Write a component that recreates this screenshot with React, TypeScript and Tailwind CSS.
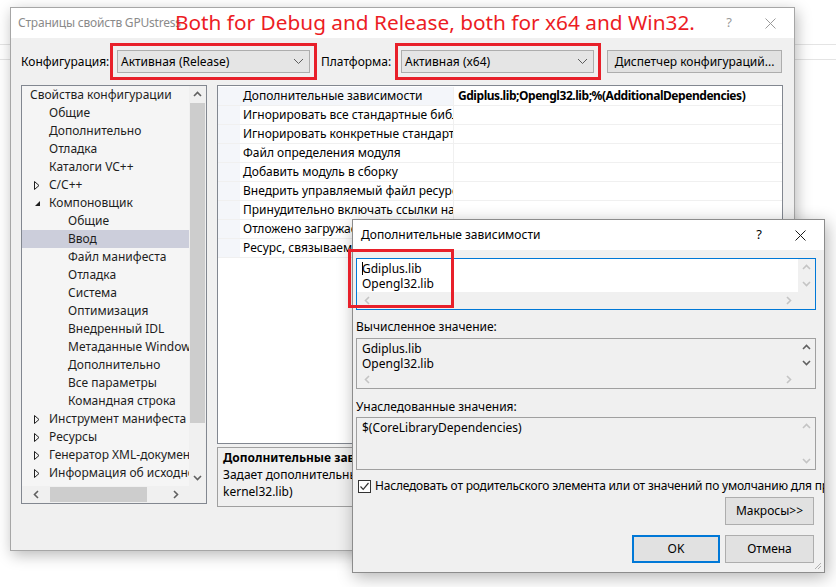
import React from 'react';

const FONT = "font-['Noto_Sans',sans-serif]";

type Dir = 'up' | 'down' | 'left' | 'right';

function Chevron({ dir, color = '#606060', size = 9 }: { dir: Dir; color?: string; size?: number }) {
  const pts: Record<Dir, string> = {
    up: '1,6 4.5,2.5 8,6',
    down: '1,3 4.5,6.5 8,3',
    left: '6,1 2.5,4.5 6,8',
    right: '3,1 6.5,4.5 3,8',
  };
  return (
    <svg width={size} height={size} viewBox="0 0 9 9" className="shrink-0">
      <polyline points={pts[dir]} fill="none" stroke={color} strokeWidth="1.6" />
    </svg>
  );
}

function ComboArrow() {
  return (
    <svg width="11" height="7" viewBox="0 0 11 7" className="shrink-0">
      <polyline points="1,1 5.5,5.5 10,1" fill="none" stroke="#5c5c5c" strokeWidth="1" />
    </svg>
  );
}

function CloseX({ color }: { color: string }) {
  return (
    <svg width="11" height="11" viewBox="0 0 11 11" className="shrink-0">
      <path d="M0.5 0.5 L10.5 10.5 M10.5 0.5 L0.5 10.5" stroke={color} strokeWidth="1" />
    </svg>
  );
}

function Expander({ open }: { open?: boolean }) {
  if (open) {
    return (
      <svg width="7" height="7" viewBox="0 0 7 7" className="shrink-0">
        <polygon points="6,1 6,6 1,6" fill="#1e1e1e" />
      </svg>
    );
  }
  return (
    <svg width="6" height="9" viewBox="0 0 6 9" className="shrink-0">
      <polygon points="0.5,0.5 5,4.5 0.5,8.5" fill="none" stroke="#1e1e1e" strokeWidth="1" />
    </svg>
  );
}

interface TreeRow {
  text: string;
  level: number;
  exp?: 'open' | 'closed';
  selected?: boolean;
}

const treeRows: TreeRow[] = [
  { text: 'Свойства конфигурации', level: 0 },
  { text: 'Общие', level: 1 },
  { text: 'Дополнительно', level: 1 },
  { text: 'Отладка', level: 1 },
  { text: 'Каталоги VC++', level: 1 },
  { text: 'C/C++', level: 1, exp: 'closed' },
  { text: 'Компоновщик', level: 1, exp: 'open' },
  { text: 'Общие', level: 2 },
  { text: 'Ввод', level: 2, selected: true },
  { text: 'Файл манифеста', level: 2 },
  { text: 'Отладка', level: 2 },
  { text: 'Система', level: 2 },
  { text: 'Оптимизация', level: 2 },
  { text: 'Внедренный IDL', level: 2 },
  { text: 'Метаданные Windows', level: 2 },
  { text: 'Дополнительно', level: 2 },
  { text: 'Все параметры', level: 2 },
  { text: 'Командная строка', level: 2 },
  { text: 'Инструмент манифеста', level: 1, exp: 'closed' },
  { text: 'Ресурсы', level: 1, exp: 'closed' },
  { text: 'Генератор XML-документов', level: 1, exp: 'closed' },
  { text: 'Информация об исходном коде', level: 1, exp: 'closed' },
];

const gridRows = [
  'Дополнительные зависимости',
  'Игнорировать все стандартные библиотеки',
  'Игнорировать конкретные стандартные библиотеки',
  'Файл определения модуля',
  'Добавить модуль в сборку',
  'Внедрить управляемый файл ресурсов',
  'Принудительно включать ссылки на символы',
  'Отложено загружаемые библиотеки DLL',
  'Ресурс, связываемый со сборкой',
];

function Tree() {
  return (
    <div className="w-[186px] h-[419px] border border-[#828790] bg-[#f5f5f5] flex flex-col">
      <div className="flex flex-1 min-h-0">
        <div className="flex-1 overflow-hidden">
          {treeRows.map((r, i) => (
            <div
              key={i}
              className={`h-[18px] flex items-center whitespace-nowrap text-[#1e1e1e] ${r.selected ? 'bg-[#cccedb]' : ''} ${
                r.level === 0 ? 'pl-[8px]' : r.level === 1 ? 'pl-[12px]' : 'pl-[46px]'
              }`}
            >
              {r.level === 1 && (
                <span className="w-[15px] shrink-0 flex items-center">
                  {r.exp && <Expander open={r.exp === 'open'} />}
                </span>
              )}
              {r.text}
            </div>
          ))}
        </div>
        <div className="w-[17px] flex flex-col items-center bg-[#f0f0f0]">
          <div className="h-[17px] flex items-center justify-center">
            <Chevron dir="up" />
          </div>
          <div className="w-[15px] h-[320px] bg-[#cdcdcd]" />
          <div className="flex-1" />
          <div className="h-[17px] flex items-center justify-center">
            <Chevron dir="down" />
          </div>
        </div>
      </div>
      <div className="h-[17px] flex items-center bg-[#f0f0f0]">
        <div className="w-[28px] flex justify-center">
          <Chevron dir="left" />
        </div>
        <div className="w-[97px] h-[15px] bg-[#cdcdcd]" />
        <div className="flex-1" />
        <div className="w-[28px] flex justify-center">
          <Chevron dir="right" />
        </div>
        <div className="w-[17px]" />
      </div>
    </div>
  );
}

function Grid() {
  return (
    <div className="w-[566px] h-[359px] border border-[#828790] bg-white pt-[1px]">
      {gridRows.map((t, i) => (
        <div key={i} className="h-[19px] flex border-b border-[#f0f0f0]">
          <div className="w-[22px] bg-[#f4f6fa]" />
          <div
            className={`w-[213px] pl-[3px] flex items-center whitespace-nowrap overflow-hidden ${i === 0 ? 'bg-[#f4f6fa]' : ''}`}
          >
            {t}
          </div>
          <div className="flex-1 pl-[4px] flex items-center border-l border-[#f0f0f0] whitespace-nowrap font-bold tracking-[-0.45px]">
            {i === 0 ? 'Gdiplus.lib;Opengl32.lib;%(AdditionalDependencies)' : ''}
          </div>
        </div>
      ))}
    </div>
  );
}

function Description() {
  return (
    <div className="mt-[3px] w-[566px] h-[60px] border border-[#a0a0a0] px-[5px] pt-[1px] leading-[17px]">
      <div className="font-bold whitespace-nowrap">Дополнительные зависимости</div>
      <div className="whitespace-nowrap">
        Задает дополнительные элементы для добавления в командную строку компоновщика (например,
      </div>
      <div className="whitespace-nowrap">kernel32.lib)</div>
    </div>
  );
}

function Combo({ text }: { text: string }) {
  return (
    <div className="w-[193px] h-[23px] bg-[#e5e5e5] border border-[#adadad] flex items-center pl-[3px] pr-[5px]">
      <span className="flex-1">{text}</span>
      <ComboArrow />
    </div>
  );
}

function MainWindow() {
  return (
    <div className="absolute left-[10px] top-[7px] w-[785px] h-[544px] border border-[#a6a6a6] bg-[#f0f0f0] flex flex-col shadow-[2px_4px_14px_rgba(0,0,0,0.28)]">
      <div className="h-[30px] bg-white flex items-center pl-[7px] pr-[18px] relative">
        <span className="text-[#8a8a8a] flex-1 tracking-[-0.2px]">Страницы свойств GPUstress</span>
        <span className="text-[#9a9a9a] text-[13px] mr-[33px]">?</span>
        <CloseX color="#9a9a9a" />
        <span className="absolute left-[164px] top-0 text-[#ec1c24] text-[20.8px] leading-[28px] whitespace-nowrap">
          Both for Debug and Release, both for x64 and Win32.
        </span>
      </div>
      <div className="flex-1 pl-[10px] pt-[12px] relative">
        <div className="flex items-center h-[23px]">
          <div className="w-[96px]">Конфигурация:</div>
          <Combo text="Активная (Release)" />
          <div className="ml-[11px] w-[80px]">Платформа:</div>
          <Combo text="Активная (x64)" />
          <div className="ml-[13px] w-[175px] h-[23px] bg-[#e1e1e1] border border-[#adadad] flex items-center justify-center">
            Диспетчер конфигураций...
          </div>
        </div>
        <div className="flex mt-[12px]">
          <Tree />
          <div className="ml-[10px] flex flex-col">
            <Grid />
            <Description />
          </div>
        </div>
        <div className="absolute left-[99px] top-[5px] w-[207px] h-[37px] border-[3px] border-[#e8202a]" />
        <div className="absolute left-[384px] top-[5px] w-[206px] h-[37px] border-[3px] border-[#e8202a]" />
      </div>
    </div>
  );
}

function ListBox({
  lines,
  focused,
  bg,
  vColor,
  h,
}: {
  lines: string[];
  focused?: boolean;
  bg: string;
  vColor: string;
  h: string;
}) {
  return (
    <div
      className={`w-[460px] ${h} border flex flex-col bg-[#f0f0f0] ${focused ? 'border-[#0078d7]' : 'border-[#a0a0a0]'}`}
    >
      <div className="flex flex-1 min-h-0">
        <div className={`flex-1 pl-[5px] pt-[2px] leading-[15px] ${bg}`}>
          {lines.map((l, i) => (
            <div key={i} className="relative">
              {focused && i === 0 && (
                <span className="absolute left-0 top-[1px] w-[1px] h-[13px] bg-black" />
              )}
              {l}
            </div>
          ))}
        </div>
        <div className="w-[17px] flex flex-col items-center pt-[4px]">
          <Chevron dir="up" color={vColor} />
          <div className="flex-1" />
          <Chevron dir="down" color={vColor} />
          <div className="h-[4px]" />
        </div>
      </div>
      {lines.length > 1 ? (
        <div className="h-[17px] flex items-center justify-between pl-[6px] pr-[22px]">
          <Chevron dir="left" color="#c4c4c4" />
          <Chevron dir="right" color="#c4c4c4" />
        </div>
      ) : null}
    </div>
  );
}

function Dialog() {
  return (
    <div className="absolute left-[352px] top-[219px] w-[473px] h-[354px] border border-[#8c8c8c] bg-[#f0f0f0] flex flex-col shadow-[2px_4px_16px_rgba(0,0,0,0.3)]">
      <div className="h-[30px] bg-white flex items-center pl-[8px] pr-[18px]">
        <span className="flex-1">Дополнительные зависимости</span>
        <span className="text-[13px] mr-[33px]">?</span>
        <CloseX color="#1a1a1a" />
      </div>
      <div className="pl-[3px] pt-[8px] flex flex-col">
        <ListBox lines={['Gdiplus.lib', 'Opengl32.lib']} focused bg="bg-white" vColor="#c4c4c4" h="h-[52px]" />
        <div className="mt-[8px] h-[17px] leading-[17px]">Вычисленное значение:</div>
        <div className="mt-[3px]">
          <ListBox lines={['Gdiplus.lib', 'Opengl32.lib']} bg="bg-[#f0f0f0]" vColor="#606060" h="h-[51px]" />
        </div>
        <div className="mt-[9px] h-[17px] leading-[17px]">Унаследованные значения:</div>
        <div className="mt-[2px]">
          <ListBox lines={['$(CoreLibraryDependencies)']} bg="bg-[#f0f0f0]" vColor="#c4c4c4" h="h-[53px]" />
        </div>
        <div className="mt-[8px] flex items-center pl-[2px] h-[16px] whitespace-nowrap overflow-hidden tracking-[-0.2px]">
          <div className="w-[13px] h-[13px] border border-[#333333] bg-white flex items-center justify-center shrink-0">
            <svg width="11" height="11" viewBox="0 0 11 11">
              <polyline points="1.5,5.5 4.2,8.3 9.5,2" fill="none" stroke="#333333" strokeWidth="1.2" />
            </svg>
          </div>
          <span className="ml-[4px]">Наследовать от родительского элемента или от значений по умолчанию для проекта</span>
        </div>
        <div className="mt-[3px] flex justify-end pr-[10px]">
          <div className="w-[89px] h-[28px] bg-[#e1e1e1] border border-[#adadad] flex items-center justify-center">
            Макросы&gt;&gt;
          </div>
        </div>
        <div className="mt-[10px] flex justify-end pr-[10px] gap-[5px]">
          <div className="w-[88px] h-[28px] bg-[#e1e1e1] border-2 border-[#0078d7] flex items-center justify-center">
            OK
          </div>
          <div className="w-[89px] h-[28px] bg-[#e1e1e1] border border-[#adadad] flex items-center justify-center">
            Отмена
          </div>
        </div>
      </div>
      <svg className="absolute right-[2px] bottom-[2px]" width="10" height="10" viewBox="0 0 10 10">
        <path d="M9 3 L3 9 M9 6 L6 9" stroke="#b0b0b0" strokeWidth="1" />
      </svg>
    </div>
  );
}

export default function App() {
  return (
    <div className={`relative w-[836px] h-[587px] overflow-hidden bg-white text-[12px] text-black ${FONT}`}>
      <div className="h-[44px]" />
      <div className="h-[16px] border-y border-[#e4e4e4]" />
      <MainWindow />
      <Dialog />
      <div className="absolute left-[348px] top-[249px] w-[106px] h-[59px] border-[3px] border-[#e8202a]" />
    </div>
  );
}
